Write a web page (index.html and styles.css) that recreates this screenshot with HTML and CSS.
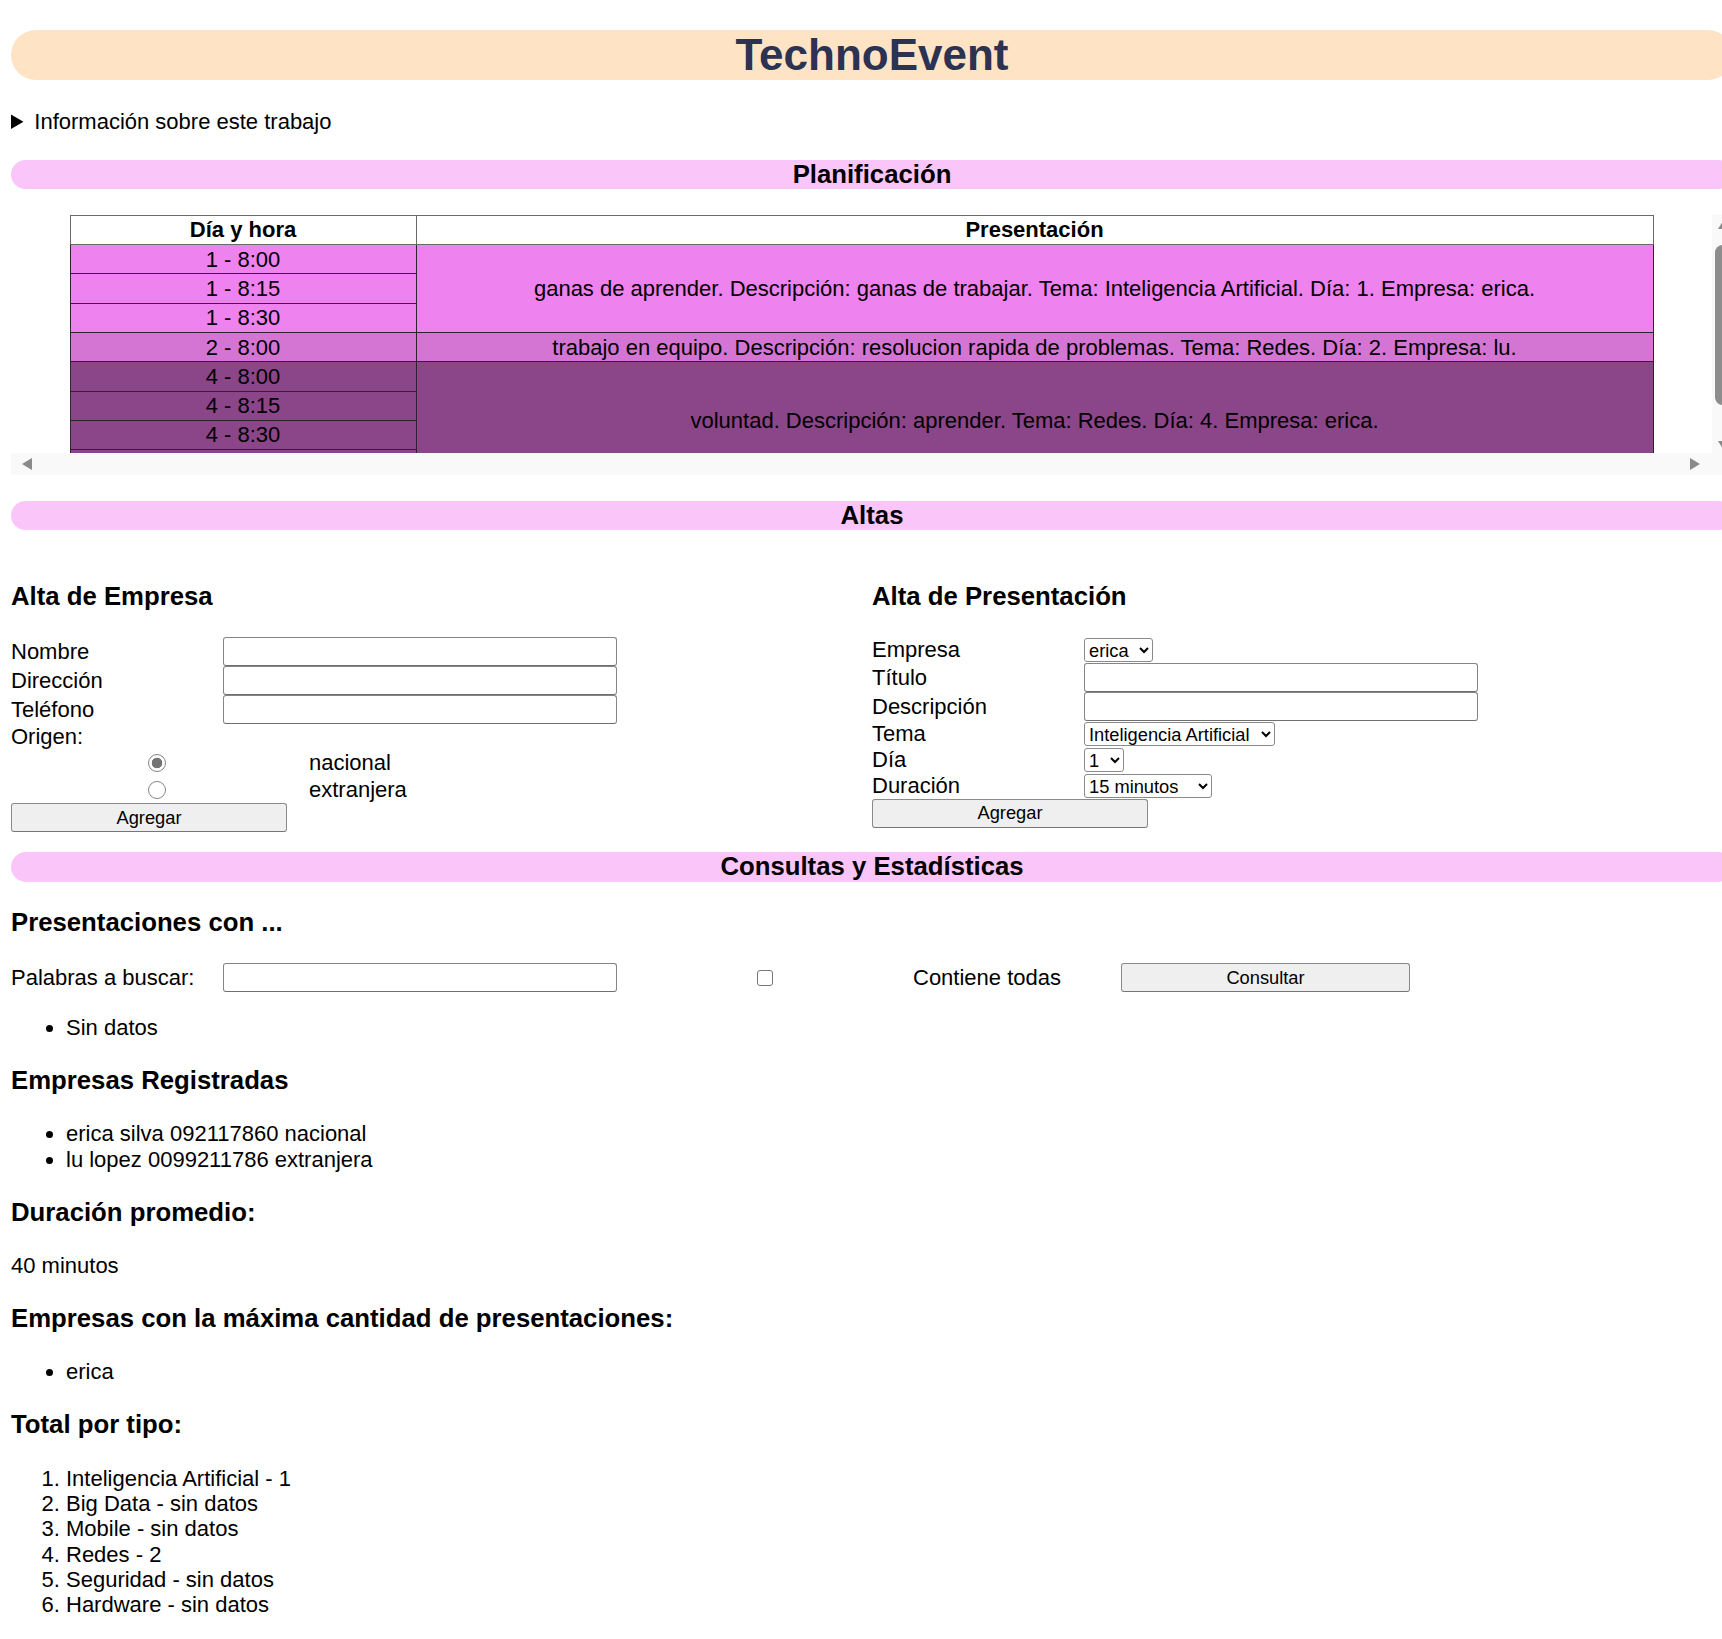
FILE: index.html
```html
<!DOCTYPE html>
<html lang="es">
<head>
<meta charset="utf-8">
<title>TechnoEvent</title>
<link rel="stylesheet" href="styles.css">
</head>
<body>
<h1 class="titulo">TechnoEvent</h1>

<details class="info">
  <summary>Información sobre este trabajo</summary>
  <p>Obligatorio de Programación.</p>
</details>

<h3 class="seccion">Planificación</h3>
<div class="agenda">
  <div class="agenda-vista">
    <table class="tabla">
      <thead>
        <tr><th class="col-hora">Día y hora</th><th>Presentación</th></tr>
      </thead>
      <tbody>
        <tr class="p1"><td>1 - 8:00</td><td rowspan="3">ganas de aprender. Descripción: ganas de trabajar. Tema: Inteligencia Artificial. Día: 1. Empresa: erica.</td></tr>
        <tr class="p1"><td>1 - 8:15</td></tr>
        <tr class="p1"><td>1 - 8:30</td></tr>
        <tr class="p2"><td>2 - 8:00</td><td>trabajo en equipo. Descripción: resolucion rapida de problemas. Tema: Redes. Día: 2. Empresa: lu.</td></tr>
        <tr class="p3"><td>4 - 8:00</td><td rowspan="4">voluntad. Descripción: aprender. Tema: Redes. Día: 4. Empresa: erica.</td></tr>
        <tr class="p3"><td>4 - 8:15</td></tr>
        <tr class="p3"><td>4 - 8:30</td></tr>
        <tr class="p3"><td>4 - 8:45</td></tr>
      </tbody>
    </table>
  </div>
  <div class="barra-v" aria-hidden="true">
    <span class="flecha flecha-arriba"></span>
    <span class="pulgar"></span>
    <span class="flecha flecha-abajo"></span>
  </div>
  <div class="barra-h" aria-hidden="true">
    <span class="flecha flecha-izq"></span>
    <span class="flecha flecha-der"></span>
  </div>
  <div class="esquina" aria-hidden="true"></div>
</div>

<h3 class="seccion">Altas</h3>
<div class="altas">
  <section class="columna">
    <h3 class="subtitulo">Alta de Empresa</h3>
    <form class="formulario">
      <label for="nombre">Nombre</label><input class="campo" type="text" id="nombre">
      <label for="direccion">Dirección</label><input class="campo" type="text" id="direccion">
      <label for="telefono">Teléfono</label><input class="campo" type="text" id="telefono">
      <span class="origen">Origen:</span>
      <div class="radios">
        <input class="radio" type="radio" name="origen" id="nacional" checked><label for="nacional">nacional</label>
        <input class="radio" type="radio" name="origen" id="extranjera"><label for="extranjera">extranjera</label>
      </div>
      <button class="boton boton-ancho" type="button">Agregar</button>
    </form>
  </section>
  <section class="columna">
    <h3 class="subtitulo">Alta de Presentación</h3>
    <form class="formulario formulario-pres">
      <label for="empresa">Empresa</label>
      <select class="lista lista-empresa" id="empresa"><option>erica</option><option>lu</option></select>
      <label for="titulo">Título</label><input class="campo" type="text" id="titulo">
      <label for="descripcion">Descripción</label><input class="campo" type="text" id="descripcion">
      <label for="tema">Tema</label>
      <select class="lista lista-tema" id="tema">
        <option>Inteligencia Artificial</option><option>Big Data</option><option>Mobile</option>
        <option>Redes</option><option>Seguridad</option><option>Hardware</option>
      </select>
      <label for="dia">Día</label>
      <select class="lista lista-dia" id="dia"><option>1</option><option>2</option><option>3</option><option>4</option><option>5</option></select>
      <label for="duracion">Duración</label>
      <select class="lista lista-duracion" id="duracion"><option>15 minutos</option><option>30 minutos</option><option>45 minutos</option><option>60 minutos</option></select>
      <button class="boton boton-ancho" type="button">Agregar</button>
    </form>
  </section>
</div>

<h3 class="seccion seccion-consultas">Consultas y Estadísticas</h3>
<h3 class="subtitulo">Presentaciones con ...</h3>
<div class="busqueda">
  <label for="palabras">Palabras a buscar:</label>
  <input class="campo" type="text" id="palabras">
  <input class="check" type="checkbox" id="todas">
  <label for="todas">Contiene todas</label>
  <button class="boton boton-consultar" type="button">Consultar</button>
</div>
<ul class="lista-datos"><li>Sin datos</li></ul>

<h3 class="subtitulo">Empresas Registradas</h3>
<ul class="lista-datos">
  <li>erica silva 092117860 nacional</li>
  <li>lu lopez 0099211786 extranjera</li>
</ul>

<h3 class="subtitulo">Duración promedio:</h3>
<p class="dato">40 minutos</p>

<h3 class="subtitulo">Empresas con la máxima cantidad de presentaciones:</h3>
<ul class="lista-datos"><li>erica</li></ul>

<h3 class="subtitulo">Total por tipo:</h3>
<ol class="lista-datos">
  <li>Inteligencia Artificial - 1</li>
  <li>Big Data - sin datos</li>
  <li>Mobile - sin datos</li>
  <li>Redes - 2</li>
  <li>Seguridad - sin datos</li>
  <li>Hardware - sin datos</li>
</ol>
</body>
</html>
```

FILE: styles.css
```css
html {
  overflow: hidden;
  background: #ffffff;
}

body {
  margin: 0 0 0 11px;
  width: 1722px;
  font-family: "Liberation Sans", Arial, sans-serif;
  font-size: 22px;
  line-height: 25.3px;
  color: #000000;
}

.titulo {
  margin: 29.5px 0 28.5px;
  font-size: 44px;
  line-height: 50.5px;
  font-weight: bold;
  text-align: center;
  background: #fee3c4;
  color: #2b3252;
  border-radius: 27.5px;
}

.info {
  margin: 0;
}

.info summary {
  cursor: pointer;
}

.seccion {
  margin: 25.74px 0;
  font-size: 25.74px;
  line-height: 29.6px;
  font-weight: bold;
  text-align: center;
  background: #fac6fa;
  border-radius: 15px;
}

.seccion-consultas {
  margin-top: 20px;
}

.subtitulo {
  margin: 25.74px 0;
  font-size: 25.74px;
  line-height: 29.6px;
  font-weight: bold;
}

/* Planificación: área con desplazamiento */
.agenda {
  display: grid;
  grid-template-columns: 1fr 21px;
  grid-template-rows: 238px 22px;
}

.agenda-vista {
  overflow: hidden;
}

.barra-v {
  display: flex;
  flex-direction: column;
  align-items: center;
  background: #f9f9f9;
}

.barra-h {
  display: flex;
  justify-content: space-between;
  align-items: center;
  padding: 0 12px 0 11px;
  background: #f9f9f9;
}

.esquina {
  background: #f9f9f9;
}

.flecha {
  display: block;
  width: 0;
  height: 0;
}

.flecha-arriba {
  margin-top: 6px;
  border-left: 5px solid transparent;
  border-right: 5px solid transparent;
  border-bottom: 8px solid #8a8a8a;
}

.flecha-abajo {
  margin-top: auto;
  margin-bottom: 4px;
  border-left: 5px solid transparent;
  border-right: 5px solid transparent;
  border-top: 8px solid #8a8a8a;
}

.pulgar {
  display: block;
  width: 15px;
  height: 160px;
  margin-top: 16px;
  border-radius: 8px;
  background: #8d8d8d;
}

.flecha-izq {
  border-top: 6px solid transparent;
  border-bottom: 6px solid transparent;
  border-right: 10px solid #8a8a8a;
}

.flecha-der {
  border-top: 6px solid transparent;
  border-bottom: 6px solid transparent;
  border-left: 10px solid #8a8a8a;
}

.tabla {
  width: 1584px;
  margin: 0 auto;
  border-collapse: collapse;
  font-size: 22px;
  line-height: 25.3px;
}

.tabla th,
.tabla td {
  border: 1px solid #2e2430;
  padding: 1.5px;
  text-align: center;
  vertical-align: middle;
}

.tabla th {
  background: #ffffff;
  font-weight: bold;
  border-color: #6a6a6a;
}

.col-hora {
  width: 342px;
}

.p1 td {
  background: #ee82ee;
}

.p2 td {
  background: #d575d3;
}

.p3 td {
  background: #8b4589;
}

/* Altas */
.altas {
  display: flex;
}

.columna {
  flex: 0 0 861px;
}

.formulario {
  display: grid;
  grid-template-columns: 212px 394px;
  align-items: center;
}

.origen {
  grid-column: 1 / 3;
}

.campo {
  box-sizing: border-box;
  width: 394px;
  height: 29px;
  margin: 0;
  padding: 1px 3px;
  border: 1px solid #858585;
  border-bottom-color: #6f6f6f;
  border-radius: 3px;
  background: #ffffff;
  font-family: "Liberation Sans", Arial, sans-serif;
  font-size: 18.3px;
}

.radios {
  grid-column: 1 / 3;
  display: grid;
  grid-template-columns: 292px auto;
  column-gap: 6px;
  grid-auto-rows: 27px;
  align-items: center;
}

.radio {
  appearance: none;
  justify-self: center;
  box-sizing: border-box;
  width: 18px;
  height: 18px;
  margin: 0;
  border: 1.4px solid #858585;
  border-radius: 50%;
  background: #ffffff;
}

.radio:checked {
  background: radial-gradient(circle, #747474 0 5px, #ffffff 5.6px);
}

.lista {
  justify-self: start;
  box-sizing: border-box;
  height: 24px;
  margin: 1px 0;
  font-family: "Liberation Sans", Arial, sans-serif;
  font-size: 18.3px;
  color: #000000;
  background-color: #ffffff;
  border: 1px solid #8a8a8a;
  border-radius: 3px;
}

.lista-empresa { width: 69px; }
.lista-tema { width: 191px; }
.lista-dia { width: 40px; }
.lista-duracion { width: 128px; }

.boton {
  box-sizing: border-box;
  height: 29px;
  margin: 0;
  padding: 0 8px;
  font-family: "Liberation Sans", Arial, sans-serif;
  font-size: 18.3px;
  color: #000000;
  background: #efefef;
  border: 1px solid #8a8a8a;
  border-bottom-color: #767676;
  border-radius: 3px;
}

.boton-ancho {
  grid-column: 1 / 3;
  width: 276px;
}

/* Consultas */
.busqueda {
  display: grid;
  grid-template-columns: 212px 394px 296px 208px 289px;
  align-items: center;
  height: 30px;
}

.check {
  appearance: none;
  justify-self: center;
  box-sizing: border-box;
  width: 16px;
  height: 16px;
  margin: 0;
  border: 1.4px solid #777777;
  border-radius: 3px;
  background: #ffffff;
}

.boton-consultar {
  width: 289px;
}

.lista-datos {
  margin: 22px 0;
  padding-left: 55px;
}

.dato {
  margin: 22px 0;
}
```
